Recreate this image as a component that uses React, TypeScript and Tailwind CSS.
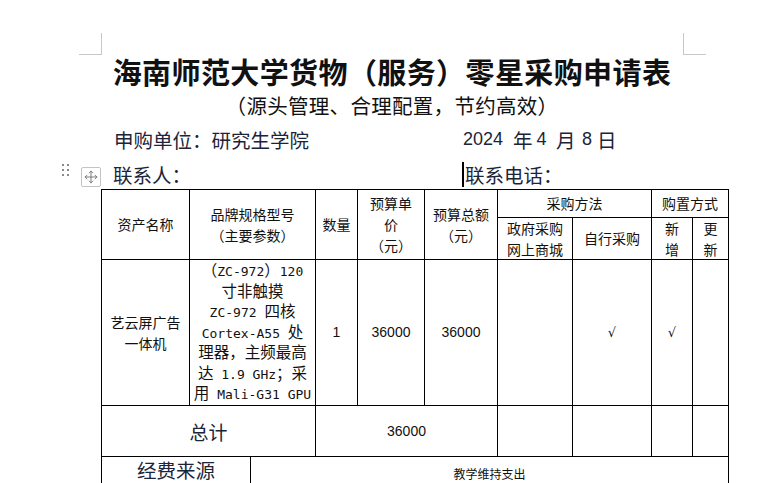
import { Move } from "lucide-react";

const cjk = "font-['Noto_Sans_CJK_SC',sans-serif]";
const spec = "font-['DejaVu_Sans_Mono','Noto_Sans_CJK_SC',monospace]";
const num = "font-['Liberation_Sans','Noto_Sans_CJK_SC',sans-serif]";

// plain white table cell, text centred
const Cell = ({
  className = "",
  children,
}: {
  className?: string;
  children?: React.ReactNode;
}) => (
  <div
    className={`bg-white flex flex-col items-center justify-center text-center ${className}`}
  >
    {children}
  </div>
);

const Mono = ({ children }: { children: React.ReactNode }) => (
  <span className="text-[13px]">{children}</span>
);

// one fixed-height line of the spec cell (mixed fonts would grow the line box)
const Line = ({ children }: { children: React.ReactNode }) => (
  <span className="h-[20.5px] whitespace-pre">{children}</span>
);

export default function App() {
  return (
    <div
      className={`relative w-[784px] h-[483px] overflow-hidden bg-white text-[#111] ${cjk}`}
    >
      {/* page corner marks */}
      <div className="absolute left-[79px] top-[33px] w-[23px] h-[22px] border-r border-b border-[#c8c8c8]" />
      <div className="absolute left-[683px] top-[33px] w-[23px] h-[22px] border-l border-b border-[#c8c8c8]" />

      {/* table drag handle + move box */}
      <div className="absolute left-[62px] top-[164px] grid grid-cols-2 gap-x-[3px] gap-y-[3px]">
        {Array.from({ length: 6 }).map((_, i) => (
          <span key={i} className="w-[2px] h-[2px] bg-[#8a8a8a]" />
        ))}
      </div>
      <div className="absolute left-[81px] top-[167px] w-[20px] h-[20px] border border-[#c4c4c4] rounded-[2px] bg-white flex items-center justify-center">
        <Move className="w-[14px] h-[14px] text-[#6b6b6b]" strokeWidth={1.5} />
      </div>

      <div className="ml-[101px] w-[582px] pt-[54px]">
        <h1 className="text-center text-[29px] leading-[34px] font-bold tracking-[0.4px]">
          海南师范大学货物（服务）零星采购申请表
        </h1>
        <p className="text-center text-[20.5px] leading-[35px] tracking-[0.3px]">
          （源头管理、合理配置，节约高效）
        </p>
        <div className="flex h-[33px] items-center text-[19.5px] text-[#1c2438]">
          <span className="ml-[13px] w-[349px]">申购单位：研究生学院</span>
          <span className={`${num} text-[18px]`}>2024</span>
          <span className="ml-[10px]">年</span>
          <span className={`${num} text-[18px] ml-[4px]`}>4</span>
          <span className="ml-[9.5px]">月</span>
          <span className={`${num} text-[18px] ml-[6.5px]`}>8</span>
          <span className="ml-[5px]">日</span>
        </div>
        <div className="flex h-[33px] items-end text-[19.5px] text-[#1c2438]">
          <span className="ml-[12px] w-[349px]">联系人：</span>
          <span className="w-[2px] h-[25px] mb-[2px] bg-black mr-[1px]" />
          <span>联系电话：</span>
        </div>
      </div>

      {/* main table */}
      <div className="ml-[101px] w-[628px] bg-black p-px grid gap-px grid-cols-[87px_125px_41px_66px_72px_74px_78px_40px_35px] grid-rows-[27px_41px_145px_50px] text-[14px] leading-[21px]">
        <Cell className="row-span-2">资产名称</Cell>
        <Cell className="row-span-2">
          <span>品牌规格型号</span>
          <span>（主要参数）</span>
        </Cell>
        <Cell className="row-span-2">数量</Cell>
        <Cell className="row-span-2">
          <span>预算单</span>
          <span>价</span>
          <span>（元）</span>
        </Cell>
        <Cell className="row-span-2">
          <span>预算总额</span>
          <span>（元）</span>
        </Cell>
        <Cell className="col-span-2">采购方法</Cell>
        <Cell className="col-span-2">购置方式</Cell>
        <Cell>
          <span>政府采购</span>
          <span>网上商城</span>
        </Cell>
        <Cell>自行采购</Cell>
        <Cell>
          <span>新</span>
          <span>增</span>
        </Cell>
        <Cell>
          <span>更</span>
          <span>新</span>
        </Cell>

        <Cell>
          <span>艺云屏广告</span>
          <span>一体机</span>
        </Cell>
        <Cell className={`${spec} text-[15.5px] leading-[20.5px] pt-px`}>
          <Line>
            （<Mono>ZC-972</Mono>）<Mono>120</Mono>
          </Line>
          <Line>寸非触摸</Line>
          <Line>
            <Mono>ZC-972 </Mono>四核
          </Line>
          <Line>
            <Mono>Cortex-A55 </Mono>处
          </Line>
          <Line>理器，主频最高</Line>
          <Line>
            达<Mono> 1.9 GHz</Mono>；采
          </Line>
          <Line>
            用<Mono> Mali-G31 GPU</Mono>
          </Line>
        </Cell>
        <Cell className={num}>1</Cell>
        <Cell className={num}>36000</Cell>
        <Cell className={num}>36000</Cell>
        <Cell />
        <Cell className="font-['DejaVu_Sans',sans-serif] italic text-[13px]">√</Cell>
        <Cell className="font-['DejaVu_Sans',sans-serif] italic text-[13px]">√</Cell>
        <Cell />

        <Cell className="col-span-2 text-[19px] text-[#1c2438]">总计</Cell>
        <Cell className={`col-span-3 ${num}`}>36000</Cell>
        <Cell />
        <Cell />
        <Cell />
        <Cell />
      </div>

      {/* funding row */}
      <div className="ml-[101px] w-[628px] bg-black px-px pb-px grid gap-px grid-cols-[148px_477px] grid-rows-[36px]">
        <div className="bg-white text-center text-[19.5px] leading-[26px] text-[#1c2438]">
          经费来源
        </div>
        <div className="bg-white text-center text-[12px] leading-[34px]">
          教学维持支出
        </div>
      </div>
    </div>
  );
}
